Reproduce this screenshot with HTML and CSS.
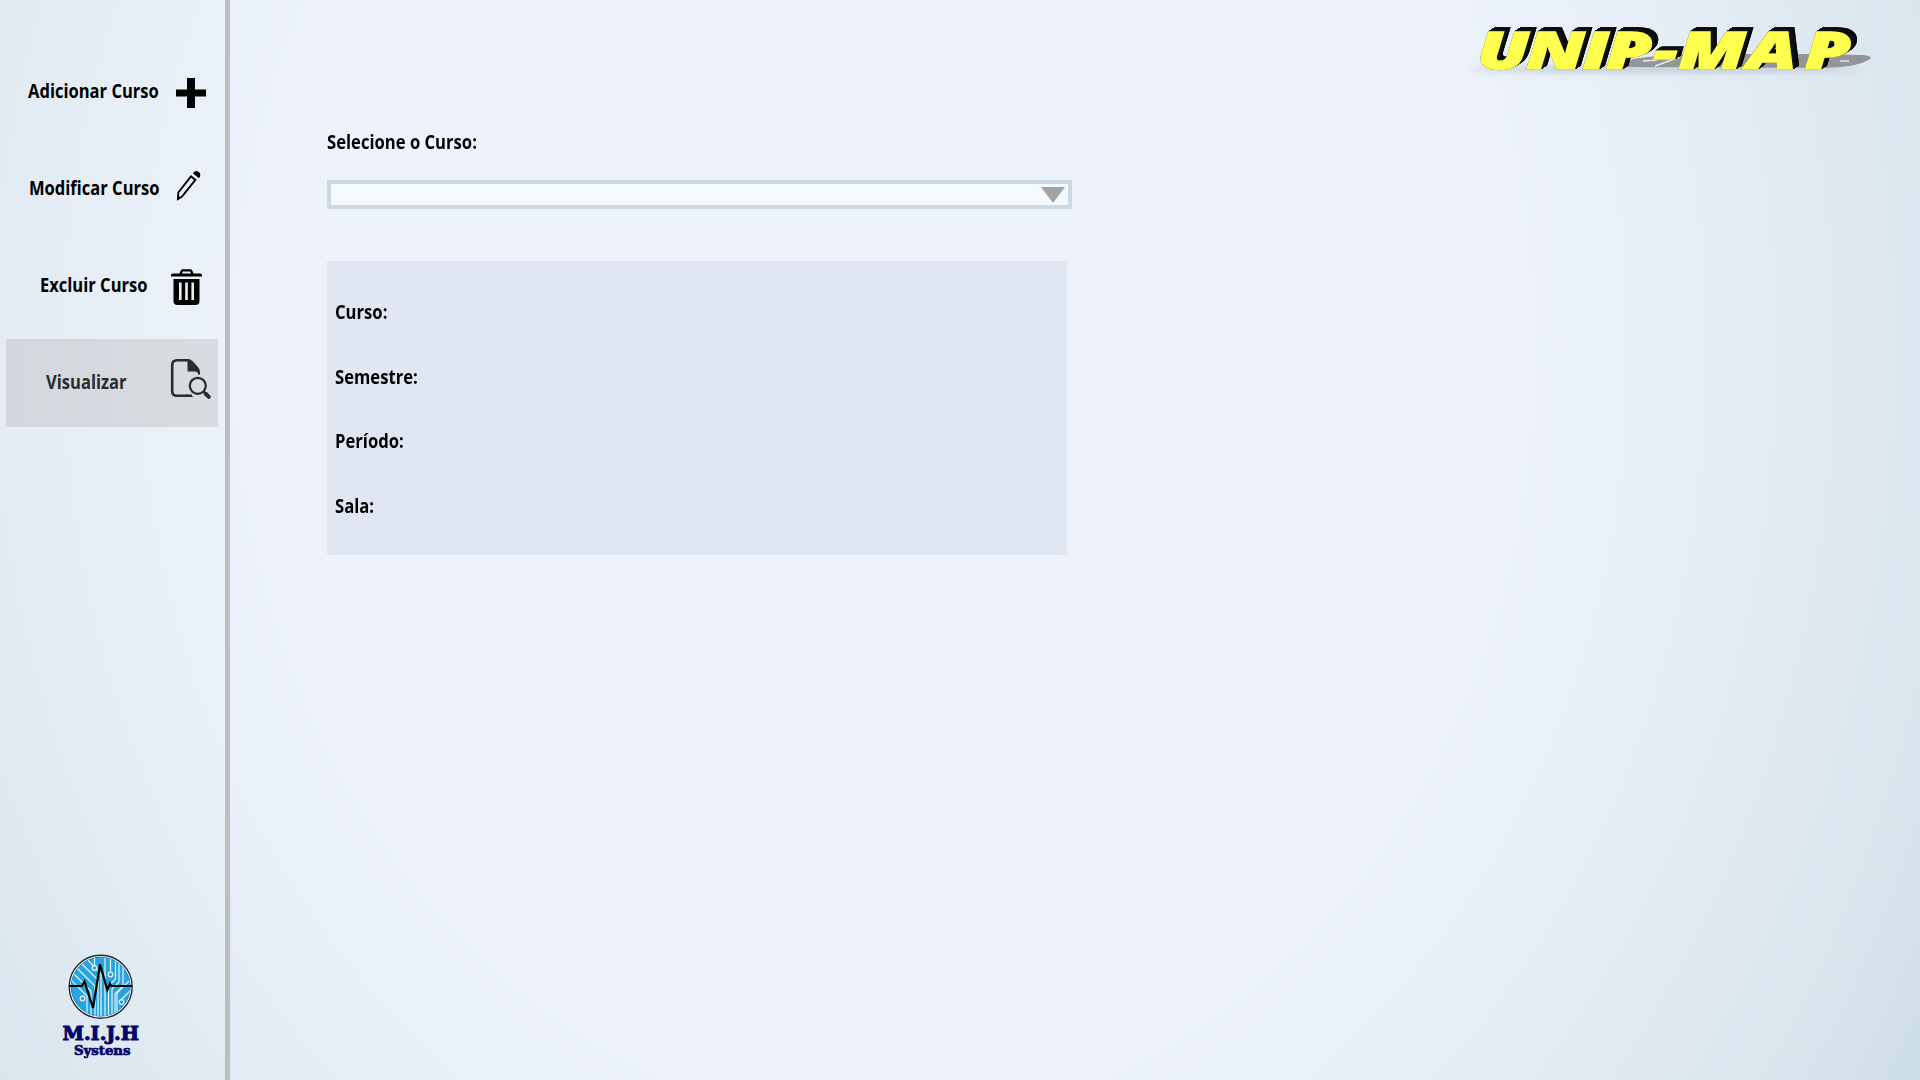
FILE: index.html
```html
<!DOCTYPE html>
<html lang="pt-BR">
<head>
<meta charset="utf-8">
<title>UNIP-MAP</title>
<link rel="stylesheet" href="styles.css">
</head>
<body>
<div class="app">
  <aside class="sidebar">
    <nav class="menu">
      <a class="item add"><span class="label">Adicionar Curso</span>
        <svg class="icon" viewBox="0 0 50 88"><path d="M19 30h8v11.500h11v7H27V60h-8V48.500H8v-7h11z"/></svg></a>
      <a class="item edit"><span class="label">Modificar Curso</span>
        <svg class="icon" viewBox="0 0 50 88"><path d="M9.300 47.500 22 31.300l4.400 3.600L13 51.500 9 54z" fill="none" stroke="#000" stroke-width="1.900"/><path d="M8.200 50.500 12.500 52.500 8.300 55.200zM24 28.500c2-3 4-3 5.800-1.500 2 1.500 2 4 .2 6.200z"/></svg></a>
      <a class="item remove"><span class="label">Excluir Curso</span>
        <svg class="icon" viewBox="0 0 50 88"><path d="M3 34.500V33q0-1.500 2-1.500h6.500l1.300-3q.5-1.300 2-1.300h7.500q1.500 0 2 1.300l1.200 3H32q2 0 2 1.500v1.500zM14 31.500h9l-.8-2h-7.400z" fill-rule="evenodd"/><path d="M5.500 37h26v22q0 4-4 4h-18q-4 0-4-4zm5.500 3.500V58h2.600V40.500zm6.200 0V58h2.600V40.500zm6.200 0V58H26V40.500z" fill-rule="evenodd"/></svg></a>
      <a class="item view active"><span class="label">Visualizar</span>
        <svg class="icon" viewBox="0 0 50 88"><path d="M21 21.200H9q-4.800 0-4.800 4.800v26q0 4.800 4.800 4.800h15" fill="none" stroke="#2b2c2e" stroke-width="2.600"/><path d="M19.500 19.900q3 0 5 2l5 5.500q2.500 2.300 2.500 5.500v2.500h-2q0-3-3-3h-7.500zM18 55.500q5 .2 8 2.600h-8z" fill="#2b2c2e"/><circle cx="29.800" cy="46.800" r="8" fill="none" stroke="#2b2c2e" stroke-width="2.200"/><path d="m35.500 52.500 2 2" stroke="#2b2c2e" stroke-width="2"/><path d="m37.500 54.500 3.300 3.300" stroke="#2b2c2e" stroke-width="4" stroke-linecap="round"/></svg></a>
    </nav>
    <svg class="brand" viewBox="40 940 120 130">
      <defs><clipPath id="disc"><circle cx="100.700" cy="986.700" r="29.500"/></clipPath></defs>
      <circle cx="100.700" cy="986.700" r="31.500" fill="#fff" stroke="#222b35" stroke-width="1.400"/>
      <circle cx="100.700" cy="986.700" r="29.500" fill="#27a5df" stroke="#1c83c6" stroke-width="1"/>
      <g clip-path="url(#disc)" fill="none" stroke="#e4f5fd" stroke-width="1.200">
        <path d="M72 972l19 19v30M76 967l19 19v35M81 963l17 17v40M87 959l14 15v45M70 979l17 17v24M94.500 955v10M105 955v64M110.500 955v17M115.500 955v24l-7 7v34M119 957v25l-7 7v30M123 959v27l-8 8v25M129 981l-12 12v26M131 990l-9 9v1"/>
        <circle cx="94.500" cy="968" r="2.300" fill="#27a5df"/><circle cx="110.500" cy="974.500" r="2.300" fill="#27a5df"/><circle cx="82.500" cy="998.500" r="2.300" fill="#27a5df"/><circle cx="121.500" cy="1002" r="2.300" fill="#27a5df"/>
      </g>
      <path d="M69 986h13l2.500-4.500L93 1008l7-43.500 7.300 25.500 2.700-6.500 1.500 2.500H132" fill="none" stroke="#000" stroke-width="2.200"/>
      <text class="brand-name" x="62.500" y="1039.500" textLength="76.500" lengthAdjust="spacingAndGlyphs">M.I.J.H</text>
      <text class="brand-sub" x="74" y="1054.500" textLength="56.500" lengthAdjust="spacingAndGlyphs">Systens</text>
    </svg>
  </aside>
  <main class="main">
    <header class="header">
      <svg class="logo" viewBox="0 0 440 90">
        <defs><filter id="soft" x="-10%" y="-100%" width="120%" height="300%"><feGaussianBlur stdDeviation="3"/></filter></defs>
        <ellipse cx="225" cy="69" rx="195" ry="3.500" fill="#a9b5c4" opacity=".6" filter="url(#soft)"/>
        <path d="M185 67q-4-6 14-9l35-4h145l44 1q14 2 3 6-12 7-52 7z" fill="#939598"/>
        <path d="M203 61l14-1M215 66l25-9M400 61h9" stroke="#e5e9ee" stroke-width="1.500"/>
        <g class="logo-text"><text y="69" transform="scale(1.450 1)" x="25.500 59.500 98.500 114.500 147 164.500 211.500 251.500">UNIP-MAP</text></g>
      </svg>
    </header>
    <section class="form">
      <div class="label">Selecione o Curso:</div>
      <div class="select"><svg class="arrow" viewBox="0 0 24 16"><path d="M0 0h24L12 16z" fill="#a3a4a4"/></svg></div>
      <div class="details">
        <div class="label">Curso:</div>
        <div class="label">Semestre:</div>
        <div class="label">Período:</div>
        <div class="label">Sala:</div>
      </div>
    </section>
  </main>
</div>
</body>
</html>
```
FILE: styles.css
```css
* { box-sizing: border-box; }
body { margin: 0; font-family: "Open Sans", "Noto Sans", sans-serif; color: #000; }
.app {
  display: flex; width: 1920px; height: 1080px; overflow: hidden;
  background: radial-gradient(ellipse 1260px 1500px at 885px 350px, #eef2fb 0%, #eef2fb 47%, #e9f0f8 57%, #e3ebf4 70%, #d9e6ee 84%, #cbdce6 97%);
}
.sidebar {
  width: 230px; border-right: 5px solid #bdbebe;
  display: flex; flex-direction: column; justify-content: space-between;
  padding: 48px 0 10px;
}
.menu { display: flex; flex-direction: column; gap: 9px; padding-left: 6px; }
.item { display: flex; justify-content: space-between; width: 212px; height: 88px; }
.label {
  width: max-content; font-size: 18.700px; font-weight: 700; line-height: 26px;
  white-space: nowrap; transform: scaleX(.89); transform-origin: left;
}
.item .label { flex: none; width: 140px; line-height: 87px; transform: translateY(-.7px) scaleX(.885); }
.add .label { margin-left: 22px; }
.edit .label { margin-left: 23px; }
.remove .label { margin-left: 34px; width: 128px; }
.view .label { margin-left: 40px; width: 122px; color: #2b2c2e; }
.active { background: rgba(178, 174, 174, .32); }
.icon { width: 50px; height: 88px; flex: none; }
.brand { width: 120px; height: 130px; margin-left: 40px; }
.brand text { font-family: "DejaVu Serif", serif; font-weight: 700; fill: #04046c; stroke: #04046c; }
.brand-name { font-size: 18.500px; stroke-width: 1px; }
.brand-sub { font-size: 13px; stroke-width: .7px; }
.main { flex: 1; display: flex; flex-direction: column; }
.header { display: flex; justify-content: flex-end; height: 90px; padding-right: 40px; }
.logo { width: 440px; height: 90px; }
.logo text {
  font: italic 800 51px "Open Sans", sans-serif; fill: #ffff4f;
  stroke: #ffff4f; stroke-width: 1.500px;
}
.logo-text {
  filter: drop-shadow(0 0 .6px #33330c) drop-shadow(1px -.5px 0 #111) drop-shadow(2px -.8px 0 #111) drop-shadow(3px -1.300px 0 #080808);
}
.form { padding: 38px 0 0 97px; }
.form > .label { height: 26px; line-height: 27px; }
.select {
  display: flex; justify-content: flex-end; width: 745px; height: 29px;
  margin-top: 26px; padding: 3px 3px 0 0; border: 4px solid #c9dae2; background: #f5f8fd;
}
.arrow { width: 24px; height: 16px; }
.details {
  width: 740px; height: 294px; margin-top: 52px; padding: 38px 0 0 8px;
  display: flex; flex-direction: column; gap: 38.700px; background: #e0e6f2;
}
```
